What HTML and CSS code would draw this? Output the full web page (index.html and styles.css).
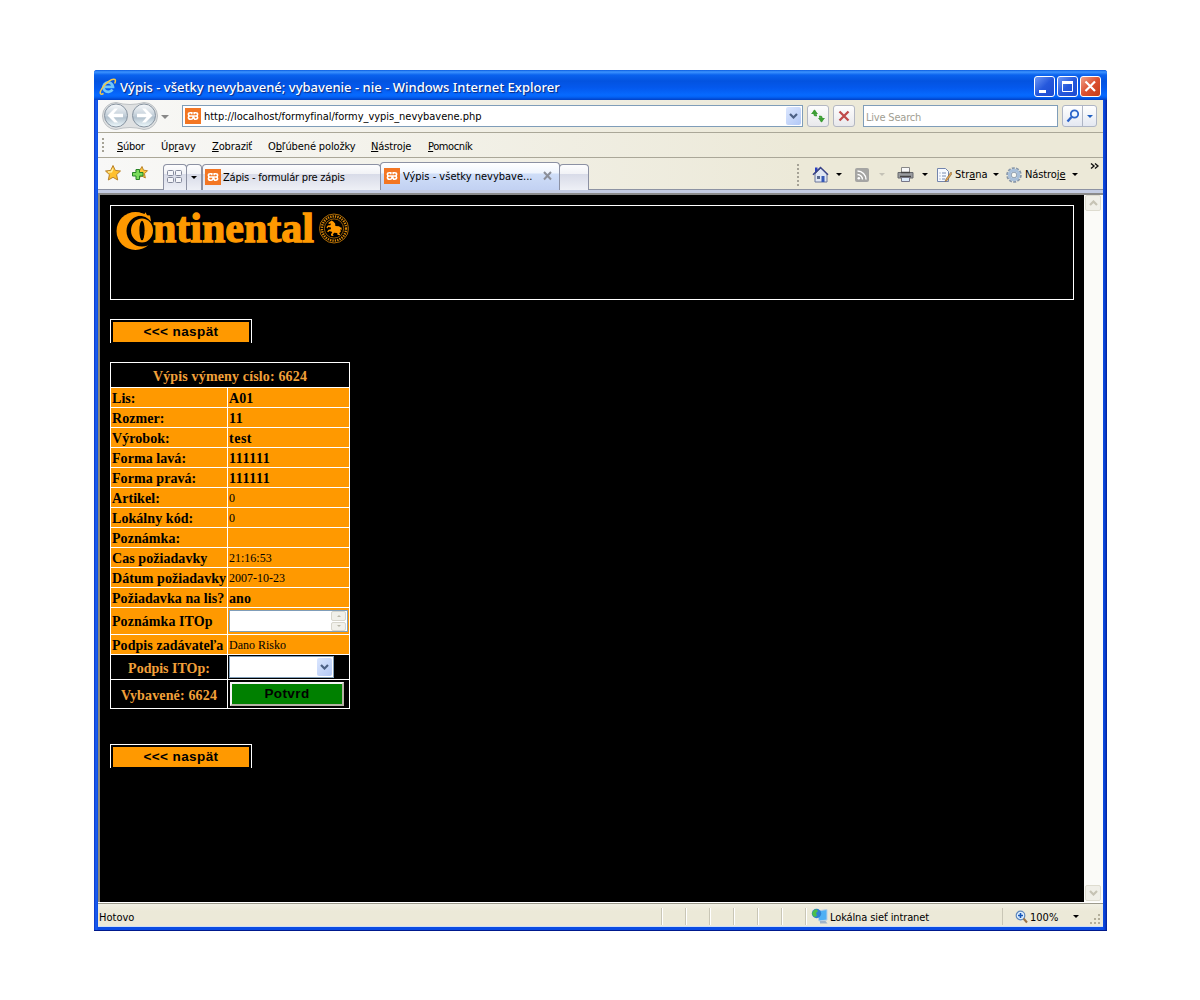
FILE: index.html
```html
<!DOCTYPE html>
<html lang="sk">
<head>
<meta charset="utf-8">
<title>Výpis - všetky nevybavené</title>
<link rel="stylesheet" href="styles.css">
</head>
<body>
<svg class="defs" width="0" height="0">
  <defs>
    <symbol id="xampp" viewBox="0 0 16 16"><rect width="16" height="16" fill="#f37623"/><path d="M6.800 6.200V4.800H5.300Q3.400 4.800 3.400 6.400T5 8Q3.400 8 3.400 9.600T5.300 11.200H6.300Q8 11.200 8 9.600T9.700 11.200H10.700Q12.600 11.200 12.600 9.600T11 8Q12.600 8 12.600 6.400T10.700 4.800H9.200V6.200M5 8h6" fill="none" stroke="#fff" stroke-width="1.600"/></symbol>
    <symbol id="chev" viewBox="0 0 9 6"><path d="M1 1l3.500 3.500L8 1" fill="none" stroke="currentColor" stroke-width="2.200"/></symbol>
    <linearGradient id="orb" x1="0" y1="0" x2="0" y2="1"><stop offset="0" stop-color="#f8fafc"/><stop offset=".4" stop-color="#ced8e0"/><stop offset=".6" stop-color="#b4c3cf"/><stop offset="1" stop-color="#effafd"/></linearGradient>
  </defs>
</svg>
<div class="window">
  <header class="titlebar">
    <svg class="ie" width="18" height="18" viewBox="0 0 18 18"><path d="M13.400 11.500A4.800 4.800 0 1 1 14 8.800H5" fill="none" stroke="#72c6f8" stroke-width="2.700"/><path d="M4.500 15.500C1 17.500 0 15 3.200 10.200 6.500 5 13 .2 15.800 1.500c1 .6.7 2.200-.2 4" fill="none" stroke="#f3c94b" stroke-width="1.500"/></svg>
    <h1 class="title">Výpis - všetky nevybavené; vybavenie - nie - Windows Internet Explorer</h1>
    <div class="winbtns">
      <span class="wb"><svg width="19" height="19"><path d="M4 13h7v3H4z" fill="#fff"/></svg></span>
      <span class="wb"><svg width="19" height="19"><path d="M4.500 6v8.500h10V6" fill="none" stroke="#fff"/><path d="M4 4h11v3H4z" fill="#fff"/></svg></span>
      <span class="wb close"><svg width="19" height="19"><path d="M4.500 4.500l9.500 9.500M14 4.500L4.500 14" stroke="#fff" stroke-width="2.200"/></svg></span>
    </div>
  </header>

  <div class="nav">
    <svg class="orbs" width="58" height="30" viewBox="0 0 58 30"><path d="M15 1.500q14 4 28 0a13 13 0 0 1 0 27q-14-4-28 0a13 13 0 0 1 0-27z" fill="#dfe1e2" stroke="#bcc0c3"/><g fill="url(#orb)" stroke="#8793a0"><circle cx="15" cy="14.500" r="11.500"/><circle cx="43" cy="14.500" r="11.500"/></g><g fill="#fff"><path d="M6.500 14.500l7-7h3.500l-4.500 5.300H22v3.400h-9.500l4.500 5.300h-3.500zM51.500 14.500l-7-7H41l4.500 5.300H36v3.400h9.500l-4.500 5.300h3.500z"/></g></svg>
    <i class="caret big"></i>
    <div class="address"><svg width="16" height="16"><use href="#xampp"/></svg><span class="url">http://localhost/formyfinal/formy_vypis_nevybavene.php</span><span class="drop"><svg width="9" height="6"><use href="#chev"/></svg></span></div>
    <span class="tb refresh"><svg width="16" height="16" viewBox="0 0 16 16"><path d="M4.500 2.500V6.500Q4.500 7.500 7 7.300M11.500 13.500V9.500Q11.500 8.500 9 8.700" fill="none" stroke="#3d9e35" stroke-width="2"/><path d="M1 6L4.500 1.500 8 6zM8 10l3.500 4.500L15 10z" fill="#3d9e35"/></svg></span>
    <span class="tb stop"><svg width="14" height="14"><path d="M2.500 2.500l9 9M11.500 2.500l-9 9" stroke="#bf4a4a" stroke-width="2.300"/></svg></span>
    <div class="search">Live Search</div>
    <div class="go"><span><svg width="14" height="14"><circle cx="8.500" cy="5" r="3.700" fill="#eef6ff" stroke="#2b63c9" stroke-width="1.800"/><path d="M5.500 8L1.500 12.500" stroke="#2b63c9" stroke-width="2.400"/></svg></span><span class="godrop"><i class="caret blue"></i></span></div>
  </div>

  <nav class="menu">
    <i class="grip"></i>
    <span class="m1"><u>S</u>úbor</span><span class="m2">Úp<u>r</u>avy</span><span class="m3"><u>Z</u>obraziť</span><span class="m4">O<u>b</u>ľúbené položky</span><span class="m5"><u>N</u>ástroje</span><span class="m6"><u>P</u>omocník</span>
  </nav>

  <div class="tabs">
    <svg class="star" width="18" height="18" viewBox="0 0 18 18"><path d="M9 1.500l2.300 4.900 5.200.6-3.900 3.600 1.100 5.400L9 13.300 4.300 16l1.100-5.400L1.500 7l5.200-.6z" fill="#ffc02e" stroke="#b9822b"/><path d="M9 4.500L7.500 7.700 4 8" fill="none" stroke="#fff0a0" stroke-width="1.500"/></svg>
    <svg class="addstar" width="18" height="18" viewBox="0 0 18 18"><path d="M11 1.500l1.500 3.700 4 .5-3 3 .8 4.300-3.300-2-4 2 .8-4.300-3-3 4-.5z" fill="#ffc83a" stroke="#b9822b"/><path d="M5 4.500h3.500v3H12V11H8.500v3.500H5V11H1.500V7.500H5z" fill="#7bdc5c" stroke="#278427"/></svg>
    <div class="tab quick"><svg width="17" height="15"><g fill="#f5f6fa" stroke="#858a9c"><rect x=".5" y=".5" width="6" height="5" rx="1"/><rect x="8.500" y=".5" width="6" height="5" rx="1"/><rect x=".5" y="7.500" width="6" height="5" rx="1"/><rect x="8.500" y="7.500" width="6" height="5" rx="1"/></g></svg></div>
    <div class="tab qdrop"><i class="caret"></i></div>
    <div class="tab page"><svg width="16" height="16"><use href="#xampp"/></svg><span class="t1">Zápis - formulár pre zápis</span></div>
    <div class="tab page active"><svg width="16" height="16"><use href="#xampp"/></svg><span class="t2">Výpis - všetky nevybave...</span><svg class="x" width="10" height="10"><path d="M1 1l7 7.500M8 1L1 8.500" stroke="#8b8f99" stroke-width="2"/></svg></div>
    <div class="tab new"></div>
    <div class="tools">
      <i class="grip"></i>
      <svg class="home" width="18" height="18" viewBox="0 0 18 18"><path d="M3 1.500h2.500V6H3z" fill="#2a3fc0"/><path d="M3 8l6-6 6 6v8H3z" fill="#dfe6f3" stroke="#6a779a"/><path d="M1 8.800L8.500 1.500l7.500 7.300" fill="none" stroke="#3a4488" stroke-width="1.600"/><path d="M9.500 10h3v6h-3z" fill="#3558b5"/><path d="M5 10h3v3H5z" fill="#58698f"/></svg>
      <i class="caret c1"></i>
      <svg class="rss" width="14" height="14"><rect width="14" height="14" rx="2" fill="#a5a5a3"/><circle cx="3.800" cy="10.300" r="1.300" fill="#fff"/><path d="M2.500 6.500a5 5 0 0 1 5 5M2.500 3a8.500 8.500 0 0 1 8.500 8.500" fill="none" stroke="#fff" stroke-width="1.400"/></svg>
      <i class="caret c2 off"></i>
      <svg class="print" width="17" height="17"><path d="M4.500 1.500h8v6h-8z" fill="#f8f8f8" stroke="#888"/><path d="M1 6.500h15V12H1z" fill="#9a9ca0" stroke="#66696d"/><path d="M4 6.500h9M3 10.500h11" stroke="#444" stroke-width="1.300"/><path d="M4.500 11.500h8v4h-8z" fill="#dceaf8" stroke="#778"/></svg>
      <i class="caret c3"></i>
      <svg class="doc" width="16" height="16"><path d="M1.500 1.500h8l3 3v10h-11z" fill="#f7faff" stroke="#7385ad"/><path d="M3.500 6h1m1.500 0h4m-6.500 3h1m1.500 0h4m-6.500 3h1m1.500 0h3" stroke="#778ab0"/><path d="M15 5l-5 7-1 2.500 2.200-1L16 6.500z" fill="#e6a54e" stroke="#7c603b" stroke-width=".6"/></svg>
      <span class="strana">Str<u>a</u>na</span><i class="caret c4"></i>
      <svg class="gear" width="16" height="16"><circle cx="8" cy="8" r="6.900" fill="none" stroke="#8796a8" stroke-width="1.800" stroke-dasharray="3 1.300"/><circle cx="8" cy="8" r="4.700" fill="#eef4fa" stroke="#a9c0da" stroke-width="3"/><circle cx="8" cy="8" r="2.800" fill="#f8f8f2" stroke="#72859a" stroke-width=".8"/></svg>
      <span class="nast">Nástroj<u>e</u></span><i class="caret c5"></i>
      <svg class="more" width="9" height="7"><path d="M1 .5l3 2.500-3 2.500M5 .5L8 3 5 5.500" fill="none" stroke="#111" stroke-width="1.400"/></svg>
    </div>
  </div>

  <div class="viewport">
    <main class="doc-body">
      <div class="banner">
        <svg width="245" height="60" viewBox="112 206 245 60" role="img" aria-label="Continental">
          <circle cx="135.500" cy="231" r="19" fill="#f90"/><circle cx="142" cy="231" r="15.500" fill="#000"/>
          <path d="M138 213l6.500 1 1-1.800 1.500 3 3 .3 1 6q-5-6-13-6z" fill="#f90"/>
          <ellipse cx="142" cy="230.500" rx="11" ry="12" fill="#f90"/><ellipse cx="142" cy="230.500" rx="2.600" ry="9.800" fill="#000"/>
          <text x="153" y="242" class="wordmark" textLength="161" lengthAdjust="spacingAndGlyphs">ntinental</text>
          <g fill="none" stroke="#d98708"><circle cx="334" cy="228.500" r="14.500" stroke-width=".8"/><circle cx="334" cy="228.500" r="12.100" stroke-width="2.400" stroke-dasharray="1.300 1.100"/><circle cx="334" cy="228.500" r="9.600" stroke-width=".7"/></g>
          <path d="M331.500 220.500l1.800 1 1.800 2 .3 2.500 3.600.3 1.500 1.300 1-.2.300 2.600-1.400-.9.400 2.600-2 1.700 1.200.3v1.300h-2.400l-.4-2-3.200-.2-1.300 2.300 1.200 1h-2.400l-.6-1.600 1.400-2.600-2.800-.8-1.400 1.200-1-.8 1.500-1.800 2.200-.4.200-1.800-2.800-.4-.9 1.300-.8-1.200 1.300-1.700 2.600-.2.500-1.900-2 .6-.6-1z" fill="#f90"/>
        </svg>
      </div>
      <div class="back"><span>&lt;&lt;&lt; naspät</span></div>
      <table class="form">
        <colgroup><col class="ca"><col class="cb"></colgroup>
        <tr class="dark r-head"><th colspan="2">Výpis výmeny císlo: 6624</th></tr>
        <tr><th>Lis:</th><td><b>A01</b></td></tr>
        <tr><th>Rozmer:</th><td><b class="num">11</b></td></tr>
        <tr><th>Výrobok:</th><td><b class="num">test</b></td></tr>
        <tr><th>Forma lavá:</th><td><b class="num">111111</b></td></tr>
        <tr><th>Forma pravá:</th><td><b class="num">111111</b></td></tr>
        <tr><th>Artikel:</th><td>0</td></tr>
        <tr><th>Lokálny kód:</th><td>0</td></tr>
        <tr><th>Poznámka:</th><td></td></tr>
        <tr><th>Cas požiadavky</th><td>21:16:53</td></tr>
        <tr><th>Dátum požiadavky</th><td>2007-10-23</td></tr>
        <tr><th>Požiadavka na lis?</th><td><b>ano</b></td></tr>
        <tr class="r-note"><th>Poznámka ITOp</th><td><div class="textarea"><div class="spin"><i></i><i class="down"></i></div></div></td></tr>
        <tr><th>Podpis zadávateľa</th><td>Dano Risko</td></tr>
        <tr class="dark r-sign"><th>Podpis ITOp:</th><td><div class="select"><span class="drop"><svg width="9" height="6"><use href="#chev"/></svg></span></div></td></tr>
        <tr class="dark r-done"><th>Vybavené: 6624</th><td><div class="submit"><span>Potvrd</span></div></td></tr>
      </table>
      <div class="back"><span>&lt;&lt;&lt; naspät</span></div>
    </main>
    <div class="scroll"><span><svg width="9" height="6" class="up"><use href="#chev"/></svg></span><span><svg width="9" height="6"><use href="#chev"/></svg></span></div>
  </div>

  <footer class="status">
    <span class="done">Hotovo</span>
    <i class="sep"></i><i class="sep"></i><i class="sep"></i><i class="sep"></i><i class="sep"></i><i class="sep"></i><i class="sep last"></i>
    <div class="zone"><svg width="18" height="17"><path d="M5.500 3l10.500-1.500v10.500l-8 1z" fill="#4fb0f4" stroke="#b9cfe6"/><path d="M9 13h5.500l2 2.500H9z" fill="#9fb3c8"/><circle cx="5.500" cy="5.500" r="4.700" fill="#2e7fd0"/><path d="M2 3l3-2 2 2-2 2 1 3-3 1-2-3z" fill="#4cbf4a"/></svg><span class="zt">Lokálna sieť intranet</span></div>
    <div class="zoom"><svg width="13" height="14"><circle cx="5.500" cy="5.500" r="4.300" fill="#dff0ff" stroke="#5f88bd" stroke-width="1.200"/><path d="M5.500 3v5M3 5.500h5" stroke="#1656b8" stroke-width="1.600"/><path d="M8.500 8.500l3.500 4" stroke="#9a7448" stroke-width="2"/></svg><span class="pc">100%</span><i class="caret"></i></div>
    <svg class="size" width="11" height="11"><g fill="#b3ae9a"><path d="M8 0h2v2H8zM4 4h2v2H4zM8 4h2v2H8zM0 8h2v2H0zM4 8h2v2H4zM8 8h2v2H8z"/></g></svg>
  </footer>
</div>
</body>
</html>
```
FILE: styles.css
```css
* { box-sizing: border-box; }
body { margin: 0; padding: 70px 93px 0 94px; background: #fff; font: 11px/14px "DejaVu Sans Condensed", "Noto Sans", sans-serif; color: #000; }
svg { display: block; flex: none; }
.defs { position: absolute; }
u { text-underline-offset: 1px; }
.window { width: 1013px; height: 861px; display: flex; flex-direction: column; padding: 0 4px 4px; background: linear-gradient(90deg, #0a35c8 0, #1c5ff0 2px, #0b4ce4 4px, #0b4ce4 1009px, #0a3fd0 1011px, #00209a 1013px); border-radius: 3px 3px 0 0; border-bottom: 1px solid #00198c; overflow: hidden; white-space: nowrap; }

.titlebar { flex: none; height: 30px; margin: 0 -4px; padding: 3px 6px 0 5px; display: flex; align-items: center; background: linear-gradient(#0a5be0 0, #3d94ff 2px, #0a62ee 5px, #0353e0 11px, #0459ee 18px, #066aff 25px, #0462f5 27px, #0140c5 30px); }
.title { margin: 0 0 0 3px; flex: 1; color: #fff; font: 500 13px/18px "Noto Sans", sans-serif; letter-spacing: .02px; text-shadow: 1px 1px 1px #0a2a80; }
.winbtns { display: flex; gap: 2px; }
.wb { width: 21px; height: 21px; border: 1px solid #fff; border-radius: 3px; background: linear-gradient(135deg, #6d97f5, #2558dc 50%, #1c4bd0); }
.wb.close { background: linear-gradient(135deg, #f0a088, #dc5030 50%, #c63d18); }

.nav { flex: none; height: 33px; display: flex; align-items: center; padding-left: 3px; background: linear-gradient(90deg, #f8f8f7, #ece9d8 70%); border-bottom: 1px solid #aaa798; }
.caret { width: 0; height: 0; border: 3px solid transparent; border-top: 3px solid #000; border-bottom: 0; flex: none; }
.caret.big { border-width: 4px 4px 0; border-top-color: #888; margin: 2px 13px 0 2px; }
.caret.blue { border-top-color: #1f5ec0; }
.caret.off { border-top-color: #c4c2b6; }
.address { width: 621px; height: 22px; border: 1px solid #7f9db9; background: #fff; display: flex; align-items: center; padding: 0 1px 0 2px; }
.url { padding: 2px 0 0 3px; flex: 1; letter-spacing: -.03px; }
.drop { width: 15px; height: 18px; background: linear-gradient(135deg, #dce7fe, #b2c8f6); border-radius: 2px; color: #4d6185; display: flex; align-items: center; justify-content: center; }
.tb { width: 22px; height: 22px; border: 1px solid #b3b7c2; border-radius: 3px; background: linear-gradient(#fdfdfd, #e9e9ec); display: flex; align-items: center; justify-content: center; margin-left: 4px; }
.search { margin-left: 8px; width: 195px; height: 22px; border: 1px solid #7f9db9; background: #fff; color: #a19e92; padding: 5px 2px 0; letter-spacing: -.2px; }
.go { margin-left: 4px; display: flex; width: 35px; height: 22px; border: 1px solid #aeb5c5; border-radius: 3px; background: linear-gradient(#fff, #e4e8f1); }
.go span { width: 20px; display: flex; align-items: center; justify-content: center; }
.go .godrop { width: 14px; border-left: 1px solid #aeb5c5; }

.menu { flex: none; height: 25px; display: flex; align-items: center; background: linear-gradient(90deg, #f8f8f7, #ece9d8 70%); border-bottom: 1px solid #aaa798; padding-left: 4px; }
.menu span { padding-top: 3px; letter-spacing: -.12px; }
.grip { width: 2px; height: 14px; background: repeating-linear-gradient(#a5a296 0 2px, transparent 2px 4px); flex: none; }
.menu .m1 { margin-left: 13px; width: 44px; letter-spacing: -.3px; }
.menu .m2 { width: 51px; }
.menu .m3 { width: 56px; }
.menu .m4 { width: 103px; }
.menu .m5 { width: 57px; }
.menu .m6 { letter-spacing: -.4px; }

.tabs { flex: none; height: 37px; display: flex; align-items: flex-end; padding: 0 0 5px 6px; background: linear-gradient(transparent 31px, #8d93a3 31px 32px, #c4cce2 32px 35px, #8b8b8b 35px), linear-gradient(90deg, #f8f8f7, #ece9d8 70%); }
.star { margin: 0 9px 8px 0; }
.addstar { margin: 0 14px 7px 0; }
.tab { height: 26px; border: 1px solid #8c91a3; border-bottom: 0; border-radius: 4px 4px 0 0; background: linear-gradient(#fdfdfe 0, #f1f2f6 9px, #d8dbe8 9px, #eef0f6); display: flex; align-items: center; flex: none; }
.quick { width: 24px; padding-left: 3px; }
.qdrop { width: 16px; margin-left: -1px; justify-content: center; }
.tab.page { width: 179px; padding: 0 0 2px 2px; }
.tab.page.active { height: 28px; margin-left: -1px; width: 180px; padding: 0 0 1px 3px; background: linear-gradient(#fff 0, #eff5fe 10px, #cfdef8 11px, #c2d1f2); }
.t1 { margin: 2px 0 0 2px; letter-spacing: -.2px; }
.t2 { margin: 2px 0 0 3px; width: 140px; }
.tab.new { width: 30px; margin-left: -1px; }
.tools { flex: 1; display: flex; align-items: center; height: 31px; padding-left: 208px; }
.tools .grip { height: 22px; margin-right: 13px; }
.home { margin-right: 6px; }
.c1 { margin-right: 13px; }
.rss { margin-right: 10px; }
.c2 { margin-right: 12px; }
.print { margin-right: 8px; }
.c3 { margin-right: 8px; }
.doc { margin-right: 3px; }
.strana { width: 38px; }
.c4 { margin-right: 7px; }
.gear { margin-right: 3px; }
.nast { width: 47px; letter-spacing: -.1px; }
.c5 { margin-right: 12px; }
.more { margin-bottom: 17px; }

.viewport { flex: 1; display: flex; min-height: 0; border-left: 2px solid #8b887c; background: #000; }
.doc-body { flex: 1; padding: 10px 10px 0; background: #000; }
.banner { width: 964px; height: 95px; border: 1px solid #fff; padding-left: 1px; }
.banner svg { overflow: visible; }
.wordmark { font: bold 43px "Liberation Serif", serif; fill: #f90; stroke: #f90; stroke-width: 1.3px; }
.back { margin-top: 19px; width: 142px; height: 24px; border: 1px solid #fff; border-bottom: 0; padding: 2px 2px 1px; }
.back span { display: block; height: 20px; background: #f90; text-align: center; font: bold 13.5px/19px "Liberation Sans", sans-serif; letter-spacing: .4px; }
.form { margin-top: 19px; width: 240px; table-layout: fixed; border-collapse: collapse; font: 12px/16px "Liberation Serif", serif; background: #f90; }
.form + .back { margin-top: 35px; }
.ca { width: 117px; }
.cb { width: 122px; }
.form th, .form td { border: 1px solid #fff; padding: 0 1px; height: 20px; text-align: left; vertical-align: middle; }
.form th, .form b { font: bold 14px/16px "Liberation Serif", serif; letter-spacing: .06px; }
.form th { padding-top: 2px; }
.form b { position: relative; top: 1px; }
.form b.num { letter-spacing: .5px; }
.form .dark th, .form .dark td { background: #000; color: #f2a03a; }
.form .dark th { text-align: center; padding-top: 3px; letter-spacing: .15px; }
.form .r-head th { height: 25px; }
.form .r-note td { height: 27px; }
.form .r-sign td { height: 25px; }
.form .r-sign th { letter-spacing: 0; }
.form .r-done td { height: 29px; }
.textarea { width: 119px; height: 22px; border: 1px solid #7f9db9; background: #fff; padding: 0 1px; }
.spin { margin-left: auto; width: 15px; height: 20px; display: flex; flex-direction: column; gap: 1px; }
.spin i { flex: 1; border: 1px solid #d8d6cc; border-radius: 2px; background: #f1f0ea; display: flex; align-items: center; justify-content: center; }
.spin i::after { content: ""; border: 2px solid transparent; border-bottom-color: #bbb8aa; border-top: 0; }
.spin i.down::after { border: 2px solid transparent; border-top-color: #bbb8aa; border-bottom: 0; }
.select { width: 105px; height: 22px; border: 1px solid #7f9db9; background: #fff; padding: 1px; display: flex; justify-content: flex-end; }
.submit { margin-left: 1px; width: 114px; height: 24px; border: 2px solid; border-color: #f5f5f5 #b5b2a5 #b5b2a5 #f5f5f5; background: #008000; color: #000; text-align: center; font: bold 13.5px/19px "Liberation Sans", sans-serif; letter-spacing: .4px; }
.scroll { width: 19px; background: #fbfbf8; display: flex; flex-direction: column; justify-content: space-between; padding: 0 2px 1px 1px; }
.scroll span { width: 16px; height: 16px; border: 1px solid #dedcd0; border-radius: 2px; background: #f0efe8; color: #c6c3b5; display: flex; align-items: center; justify-content: center; }
.up { transform: rotate(180deg); }

.status { flex: none; height: 25px; margin-bottom: -1px; border-top: 1px solid #fff; box-shadow: inset 0 1px #9c9a8c, inset 0 -1px #cfe0f5; background: linear-gradient(#f2f1e6, #ece9d8 8px); display: flex; align-items: center; padding: 3px 0 0 1px; }
.done { width: 562px; padding-top: 2px; }
.sep { width: 2px; height: 17px; border-left: 1px solid #c9c6b6; border-right: 1px solid #fff; margin-right: 22px; }
.sep.last { margin-right: 4px; }
.zone { display: flex; align-items: center; gap: 1px; width: 192px; height: 17px; border-right: 1px solid #c9c6b6; }
.zt { padding-top: 2px; letter-spacing: -.12px; }
.zoom { display: flex; align-items: center; padding-left: 12px; }
.pc { padding-top: 2px; margin-left: 2px; width: 43px; }
.size { margin: 6px 0 0 11px; }
```
